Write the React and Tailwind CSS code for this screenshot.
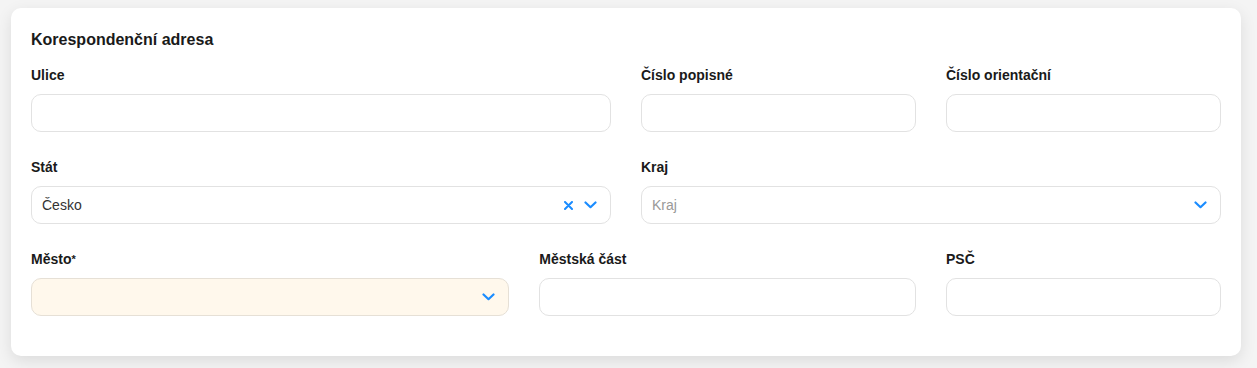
import React from "react";

const Chevron = () => (
  <svg width="13" height="8" viewBox="0 0 13 8" fill="none" className="shrink-0">
    <path d="M1.5 1.5 L6.5 6.2 L11.5 1.5" stroke="#1a8cff" strokeWidth="2.2" strokeLinecap="round" strokeLinejoin="round" />
  </svg>
);

const Cross = () => (
  <svg width="9" height="9" viewBox="0 0 9 9" fill="none" className="shrink-0">
    <path d="M1 1 L8 8 M8 1 L1 8" stroke="#1a8cff" strokeWidth="2" strokeLinecap="round" />
  </svg>
);

function Field({ label, span, children }) {
  return (
    <div className={span}>
      <div className="h-[20px] leading-[20px] text-[14px] font-bold text-[#1a1a1a]">{label}</div>
      <div className="mt-[9px]">{children}</div>
    </div>
  );
}

const Input = ({ bg = "bg-white" }) => (
  <div className={`h-[38px] rounded-[10px] border border-[#e2e2e2] ${bg}`} />
);

export default function App() {
  return (
    <div className="min-h-[368px] bg-[#f4f4f4] pt-[8px] pl-[11px] pr-[16px] pb-[12px]" style={{ fontFamily: '"Liberation Sans", Arial, sans-serif' }}>
      <div className="rounded-[10px] bg-white px-[20px] pt-[20px] pb-[40px] shadow-[0_5px_16px_rgba(0,0,0,0.10)]">
        <div className="h-[24px] leading-[24px] text-[16px] font-bold text-[#1a1a1a]">Korespondenční adresa</div>
        <div className="mt-[13px] grid grid-cols-12 gap-x-[30px] gap-y-[25px]">
          <Field label="Ulice" span="col-span-6"><Input /></Field>
          <Field label="Číslo popisné" span="col-span-3"><Input /></Field>
          <Field label="Číslo orientační" span="col-span-3"><Input /></Field>

          <Field label="Stát" span="col-span-6">
            <div className="flex h-[38px] items-center rounded-[10px] border border-[#e2e2e2] bg-white pl-[10px] pr-[13px]">
              <span className="flex-1 text-[14px] text-[#333333]">Česko</span>
              <div className="flex items-center gap-[11px]">
                <Cross />
                <Chevron />
              </div>
            </div>
          </Field>
          <Field label="Kraj" span="col-span-6">
            <div className="flex h-[38px] items-center rounded-[10px] border border-[#e2e2e2] bg-white pl-[10px] pr-[13px]">
              <span className="flex-1 text-[14px] text-[#999999]">Kraj</span>
              <Chevron />
            </div>
          </Field>

          <Field label={<>Město<span className="text-[11px] align-top">*</span></>} span="col-span-5">
            <div className="flex h-[38px] items-center rounded-[10px] border border-[#e6e0d6] bg-[#fff8ec] pl-[10px] pr-[13px]">
              <span className="flex-1" />
              <Chevron />
            </div>
          </Field>
          <Field label="Městská část" span="col-span-4"><Input /></Field>
          <Field label="PSČ" span="col-span-3"><Input /></Field>
        </div>
      </div>
    </div>
  );
}
